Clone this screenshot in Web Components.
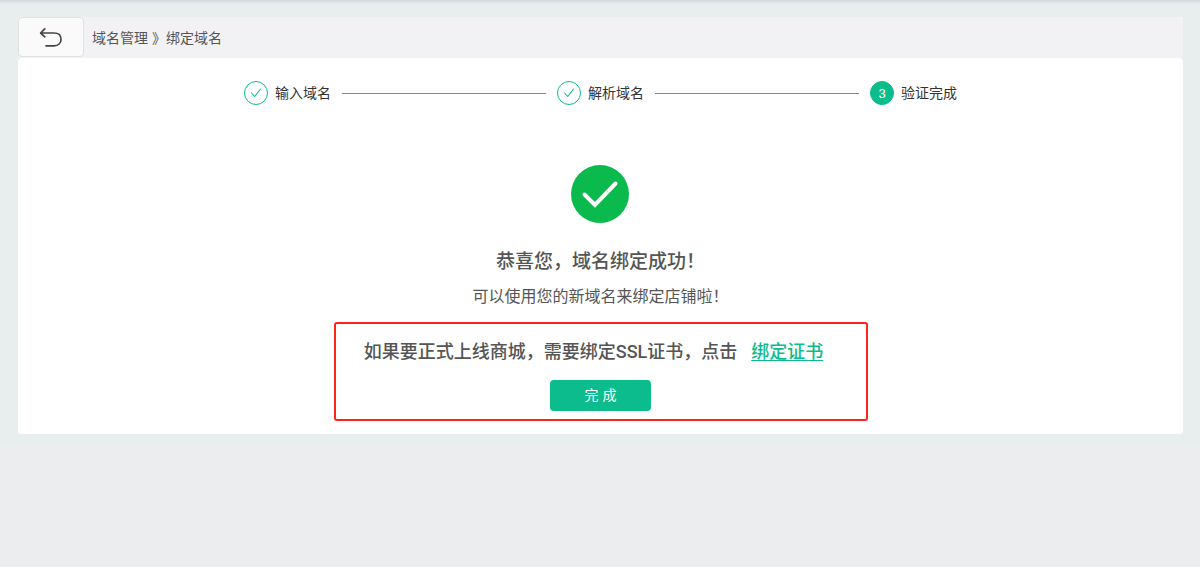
<!DOCTYPE html>
<html lang="zh-CN">
<head>
<meta charset="utf-8">
<meta name="viewport" content="width=device-width, initial-scale=1">
<title>绑定域名</title>
<style>
  html { background: #ecedef; }
  body {
    margin: 0;
    font-family: "Liberation Sans", "Noto Sans CJK SC", sans-serif;
    font-size: 14px;
    color: #555;
    --brand: #0dbc8c;
  }
</style>
</head>
<body>
<domain-page>
  <page-header slot="header" parent="域名管理" current="绑定域名"></page-header>
  <step-list>
    <step-item state="done" number="1">输入域名</step-item>
    <step-item state="done" number="2">解析域名</step-item>
    <step-item state="current" number="3">验证完成</step-item>
  </step-list>
  <result-message>
    <span slot="title">恭喜您，域名绑定成功！</span>
    <span slot="detail">可以使用您的新域名来绑定店铺啦！</span>
  </result-message>
  <ssl-notice></ssl-notice>
</domain-page>

<script>
  const define = (name, html, setup) => {
    const template = document.createElement("template");
    template.innerHTML = html;
    customElements.define(name, class extends HTMLElement {
      constructor() {
        super();
        this.attachShadow({ mode: "open" }).append(template.content.cloneNode(true));
      }
      connectedCallback() {
        if (setup) setup(this, this.shadowRoot);
      }
    });
  };

  define("domain-page", `
    <style>
      :host {
        display: block;
        padding: 17px 17px 12px 18px;
        background: linear-gradient(#d3d8dc, #e8edee 4px);
      }
      main {
        display: flex;
        flex-direction: column;
        align-items: center;
        padding: 23px 16px 13px;
        background: #fff;
        border-radius: 4px;
      }
    </style>
    <slot name="header"></slot>
    <main><slot></slot></main>
  `);

  define("page-header", `
    <style>
      :host {
        display: flex;
        align-items: center;
        gap: 8px;
        height: 41px;
        background: #f2f2f4;
      }
      button {
        display: grid;
        place-items: center;
        box-sizing: border-box;
        width: 66px;
        height: 40px;
        align-self: flex-start;
        padding: 0;
        border: 1px solid #e1e1e2;
        border-radius: 4px;
        background: #fafafa;
        color: #444;
        cursor: pointer;
      }
      nav { line-height: 20px; }
    </style>
    <button type="button" aria-label="返回">
      <svg width="24" height="22" viewBox="0 0 24 22" fill="none" stroke="currentColor" stroke-width="1.7" stroke-linecap="round" stroke-linejoin="round">
        <path d="M5.8 2.8 1.6 7 5.8 10.8M2 7 H15 C19.5 7 22 9.6 22 13.2 C22 17 19.4 19.8 15 19.8 H7"/>
      </svg>
    </button>
    <nav></nav>
  `, (host, root) => {
    root.querySelector("nav").textContent =
      host.getAttribute("parent") + " 》" + host.getAttribute("current");
  });

  define("step-list", `
    <style>
      :host {
        display: flex;
        gap: 11px;
        width: 100%;
        max-width: 713px;
      }
    </style>
    <slot></slot>
  `);

  define("step-item", `
    <style>
      :host {
        display: flex;
        align-items: center;
        flex: 1 1 auto;
        color: #333;
        line-height: 24px;
        white-space: nowrap;
      }
      :host(:last-child) { flex: none; }
      .mark {
        display: grid;
        place-items: center;
        box-sizing: border-box;
        width: 24px;
        height: 24px;
        margin-right: 7px;
        border: 1px solid var(--brand);
        border-radius: 50%;
        color: var(--brand);
      }
      .mark b { display: none; font-weight: 400; font-size: 13px; }
      :host([state="current"]) .mark { background: var(--brand); color: #fff; }
      :host([state="current"]) b { display: block; }
      :host([state="current"]) svg { display: none; }
      .line { flex: 1; height: 0; margin-left: 11px; border-top: 1px solid #2fb48e; }
      :host(:last-child) .line { display: none; }
    </style>
    <span class="mark">
      <svg width="12" height="10" viewBox="0 0 12 10" fill="none" stroke="currentColor" stroke-width="1.1" stroke-linecap="round" stroke-linejoin="round"><path d="M1.5 5 4.7 8.5 10.5 1"/></svg>
      <b></b>
    </span>
    <slot></slot>
    <span class="line"></span>
  `, (host, root) => {
    root.querySelector("b").textContent = host.getAttribute("number");
  });

  define("result-message", `
    <style>
      :host {
        display: flex;
        flex-direction: column;
        align-items: center;
        margin: 60px 0 13px;
        text-align: center;
      }
      h1 {
        margin: 23px 0 11px;
        font-family: "Noto Sans CJK SC", sans-serif;
        font-size: 19px;
        font-weight: 500;
        line-height: 28px;
      }
      p { margin: 0; font-size: 16px; line-height: 24px; }
    </style>
    <svg width="58" height="58" viewBox="0 0 58 58" aria-hidden="true">
      <circle cx="29" cy="29" r="29" fill="#0bba4c"/>
      <path d="M13.5 29.5 24 40 44.5 18.5" fill="none" stroke="#fff" stroke-width="4" stroke-linecap="round" stroke-linejoin="miter"/>
    </svg>
    <h1><slot name="title"></slot></h1>
    <p><slot name="detail"></slot></p>
  `);

  define("ssl-notice", `
    <style>
      :host {
        display: flex;
        flex-direction: column;
        align-items: center;
        gap: 14px;
        box-sizing: border-box;
        width: 100%;
        max-width: 534px;
        padding: 14px 8px 8px;
        border: 2px solid #fb2618;
        border-radius: 3px;
      }
      p {
        margin: 0;
        font-family: Roboto, "Noto Sans CJK SC", sans-serif;
        font-size: 18px;
        font-weight: 500;
        line-height: 28px;
        text-align: center;
      }
      a { margin: 0 14px; color: var(--brand); text-underline-offset: 2px; }
      button {
        width: 101px;
        height: 31px;
        padding: 0 0 4px;
        border: 0;
        border-radius: 4px;
        background: var(--brand);
        color: #fff;
        font: inherit;
        cursor: pointer;
      }
    </style>
    <p>如果要正式上线商城，需要绑定SSL证书，点击<a href="#certificate">绑定证书</a></p>
    <button type="button">完 成</button>
  `);
</script>
</body>
</html>
